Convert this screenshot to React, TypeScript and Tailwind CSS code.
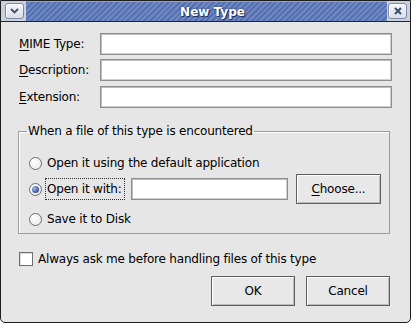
import React from "react";

function TitleButton({ children }: { children: React.ReactNode }) {
  return (
    <div className="w-[19px] h-[16px] rounded-[3px] border border-[#7d8aa6] bg-[linear-gradient(#f4f6fa,#d9dee8)] flex items-center justify-center shadow-[inset_1px_1px_0_#ffffff]">
      {children}
    </div>
  );
}

function TitleBar() {
  return (
    <div className="flex h-[21px] bg-[#c9d0de] border-b border-[#1c2438]">
      <div className="w-[25px] flex items-center justify-center pl-[2px]">
        <TitleButton>
          <svg width="9" height="6" viewBox="0 0 9 6">
            <path d="M1 1 L4.5 4.5 L8 1" fill="none" stroke="#3e4d6e" strokeWidth="1.8" />
          </svg>
        </TitleButton>
      </div>
      <div className="flex-1 flex items-center justify-center pl-[12px] border-t border-[#8fa3d4] bg-[repeating-linear-gradient(135deg,#5671b0_0px,#5671b0_2px,#6f87c2_2px,#6f87c2_4px)]">
        <span className="text-white font-bold text-[12px] [text-shadow:0_0_2px_#1c2a55,1px_1px_0_#22305c]">
          New Type
        </span>
      </div>
      <div className="w-[23px] flex items-center justify-center pr-[2px]">
        <TitleButton>
          <svg width="8" height="8" viewBox="0 0 8 8">
            <path d="M1 1 L7 7 M7 1 L1 7" fill="none" stroke="#3e4d6e" strokeWidth="2" />
          </svg>
        </TitleButton>
      </div>
    </div>
  );
}

function TextInput({ className = "" }: { className?: string }) {
  return (
    <div
      className={`h-[22px] bg-white border border-[#8e8e8e] shadow-[inset_1px_1px_0_#bdbdbd,inset_-1px_-1px_0_#d0d0d0] ${className}`}
    />
  );
}

function FieldRow({ u, rest, className = "" }: { u: string; rest: string; className?: string }) {
  return (
    <div className={`flex items-center h-[22px] ${className}`}>
      <span className="w-[81px]">
        <u className="underline-offset-2">{u}</u>
        {rest}
      </span>
      <TextInput className="w-[292px]" />
    </div>
  );
}

function Radio({ checked = false }: { checked?: boolean }) {
  return (
    <div className="w-[13px] h-[13px] shrink-0 rounded-full border border-[#6f6f6f] bg-[radial-gradient(circle_at_35%_35%,#ffffff,#e4e4e4)] flex items-center justify-center">
      {checked && (
        <div className="w-[7px] h-[7px] rounded-full bg-[radial-gradient(circle_at_35%_35%,#a9bbe6,#34509c_70%)]" />
      )}
    </div>
  );
}

function Button({ children, className = "" }: { children: React.ReactNode; className?: string }) {
  return (
    <div
      className={`h-[30px] flex items-center justify-center border border-[#5e5e5e] bg-[#e8e8e8] shadow-[inset_1px_1px_0_#ffffff,inset_-1px_-1px_0_#bcbcbc] ${className}`}
    >
      {children}
    </div>
  );
}

export default function App() {
  return (
    <div className="w-[411px] h-[323px] flex flex-col bg-[#e6e6e6] border border-[#1e1e1e] rounded-b-[5px] overflow-hidden font-['DejaVu_Sans',sans-serif] text-[12px] leading-[14px] text-black">
      <TitleBar />
      <div className="flex flex-col pl-[18px] pr-[18px] pt-[11px] tracking-[-0.2px]">
        <FieldRow u="M" rest="IME Type:" />
        <FieldRow u="D" rest="escription:" className="mt-[4px]" />
        <FieldRow u="E" rest="xtension:" className="mt-[5px]" />

        <fieldset className="mt-[16px] ml-[-1px] w-[372px] h-[110px] border border-[#9d9d9d] shadow-[inset_1px_1px_0_#ffffff] pl-[10px]">
          <legend className="ml-[-2px] px-[1px] leading-[14px]">When a file of this type is encountered</legend>
          <div className="flex items-center gap-[5px] h-[22px] mt-[14px]">
            <Radio />
            <span>Open it using the default application</span>
          </div>
          <div className="flex items-center h-[30px]">
            <Radio checked />
            <span className="ml-[3px] w-[80px] h-[22px] flex items-center px-[1px] whitespace-nowrap border border-dotted border-[#303030]">
              Open it with:
            </span>
            <TextInput className="ml-[6px] w-[157px]" />
            <Button className="ml-[8px] w-[85px]">
              <span>
                <u className="underline-offset-2">C</u>hoose...
              </span>
            </Button>
          </div>
          <div className="flex items-center gap-[5px] h-[22px] mt-[4px]">
            <Radio />
            <span>Save it to Disk</span>
          </div>
        </fieldset>

        <div className="flex items-center gap-[5px] h-[14px] mt-[18px]">
          <div className="w-[14px] h-[14px] bg-white border border-[#6f6f6f] shadow-[inset_1px_1px_0_#dcdcdc]" />
          <span>Always ask me before handling files of this type</span>
        </div>

        <div className="flex justify-end gap-[11px] mt-[10px] mr-[2px]">
          <Button className="w-[84px]">OK</Button>
          <Button className="w-[84px]">Cancel</Button>
        </div>
      </div>
    </div>
  );
}
